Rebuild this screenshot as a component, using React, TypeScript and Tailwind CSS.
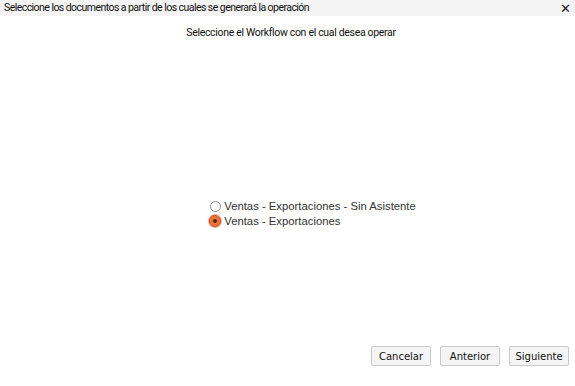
import { useState } from 'react';

const workflows = [
  'Ventas - Exportaciones - Sin Asistente',
  'Ventas - Exportaciones',
];

export default function App() {
  const [selected, setSelected] = useState(1);

  return (
    <div className="w-[575px] h-[386px] bg-white flex flex-col font-['Liberation_Sans',sans-serif] text-[#222]">
      {/* título */}
      <div className="h-4 bg-[#f4f4f4] flex items-center justify-between pl-1 pr-1">
        <span className="text-[10.5px] tracking-[-0.55px] font-['Roboto',sans-serif] text-[#111]">Seleccione los documentos a partir de los cuales se generará la operación</span>
        <span className="text-[13px] leading-none font-['DejaVu_Sans',sans-serif]">✕</span>
      </div>

      <p className="mt-[9px] pl-[7px] text-center text-[10.5px] tracking-[-0.32px] font-['Roboto',sans-serif] text-[#111]">Seleccione el Workflow con el cual desea operar</p>

      {/* opciones */}
      <div className="flex-1 flex items-center justify-center pt-[41px] pl-[50px]">
        <div className="flex flex-col text-[11.3px] text-[#333] leading-[15px]">
          {workflows.map((w, i) => (
            <label key={w} className="flex items-center gap-[3px]">
              {selected === i ? (
                <span className="w-[12px] h-[12px] rounded-full bg-[#e9743c] border border-[#c2562a] shadow-[0_0_0_1px_#f6b08e] flex items-center justify-center">
                  <span className="w-[4px] h-[4px] rounded-full bg-[#5a2410]" />
                </span>
              ) : (
                <span className="w-[11px] h-[11px] rounded-full border border-[#8f8f8f] bg-white ml-[1px]" />
              )}
              <input type="radio" className="hidden" checked={selected === i} onChange={() => setSelected(i)} />
              {w}
            </label>
          ))}
        </div>
      </div>

      {/* botones */}
      <div className="flex justify-end gap-[9px] pr-[6px] pb-[20px] font-['DejaVu_Sans',sans-serif] text-[10px] text-[#111]">
        <button className="w-[60px] h-[20px] bg-[#f5f5f5] border border-[#c9c9c9] rounded-[2px]">Cancelar</button>
        <button className="w-[60px] h-[20px] bg-[#f5f5f5] border border-[#c9c9c9] rounded-[2px]">Anterior</button>
        <button className="w-[60px] h-[20px] bg-[#f5f5f5] border border-[#c9c9c9] rounded-[2px]">Siguiente</button>
      </div>
    </div>
  );
}
